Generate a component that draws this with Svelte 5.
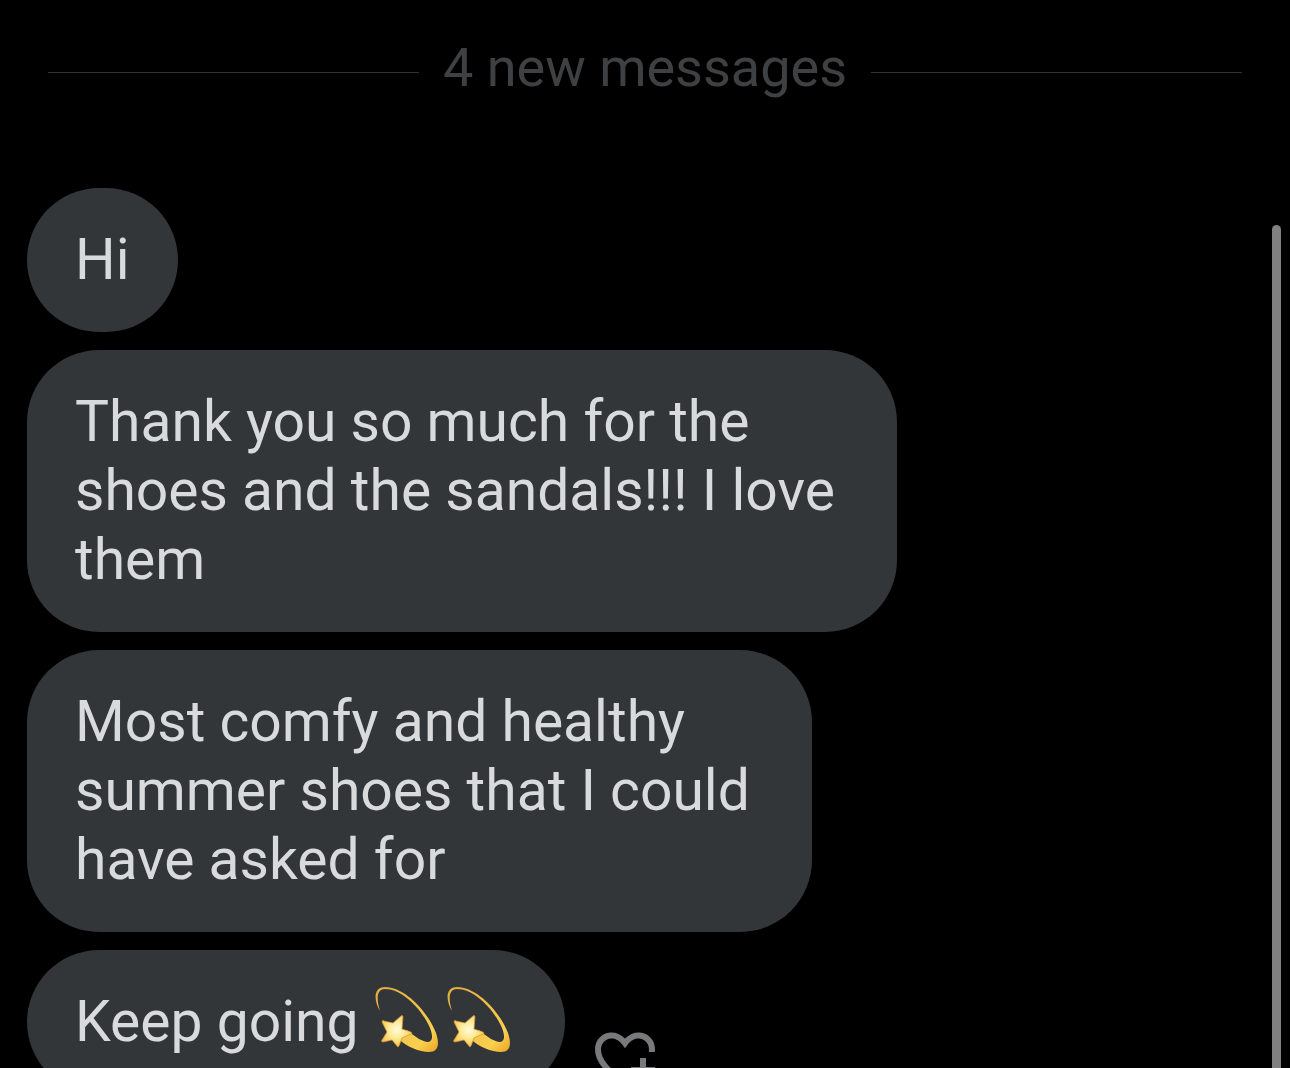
<script>
  const messages = [
    { lines: ['Hi'] },
    { lines: ['Thank you so much for the ', 'shoes and the sandals!!! I love ', 'them'] },
    { lines: ['Most comfy and healthy ', 'summer shoes that I could ', 'have asked for'] },
    { lines: ['Keep going '], stars: 2, canReact: true }
  ];
</script>

<svelte:head>
  <title>Messages</title>
</svelte:head>

<main class="conversation">
  <div class="divider">
    <span class="divider-label">4 new messages</span>
  </div>

  <ul class="messages">
    {#each messages as message}
      <li class="message">
        <p class="bubble">{message.lines.join('\n')}{#each { length: message.stars || 0 } as _}<svg class="emoji" viewBox="0 0 72 72" role="img" aria-label="dizzy">
              <defs>
                <linearGradient id="tail" x1="0" y1="0" x2="1" y2="1">
                  <stop offset="0" stop-color="#e3a93c" />
                  <stop offset="0.5" stop-color="#f2c14a" />
                  <stop offset="0.8" stop-color="#f9d04e" />
                  <stop offset="1" stop-color="#e9a426" />
                </linearGradient>
                <radialGradient id="star" cx="0.5" cy="0.45" r="0.6">
                  <stop offset="0" stop-color="#fffbe0" />
                  <stop offset="0.45" stop-color="#fdeb94" />
                  <stop offset="1" stop-color="#f3bd3a" />
                </radialGradient>
              </defs>
              <path
                fill="url(#tail)"
                d="M7 29C0 17 1 5 12 5c20 0 43 25 51 46 4 12 2 19-7 19-10 0-21-5-31-13l9-9c8 7 16 12 21 12 5-1 5-6 2-14C49 27 29 7 12 7 4 7 3 16 7 29z"
              />
              <path
                fill="url(#star)"
                stroke="#d98f3a"
                stroke-width="0.7"
                stroke-linejoin="round"
                d="M28 34c1-1 2 0 2 1l-1 12 9 3c1 1 1 2 0 2l-9 4-3 8c-1 1-2 1-2 0l-5-6-9 2c-1 0-2-1-1-2l5-8-5-10c0-1 1-2 2-1l9 2z"
              />
            </svg>{/each}</p>
        {#if message.canReact}
          <button class="react" aria-label="Add reaction">
            <svg viewBox="0 0 24 24" aria-hidden="true">
              <path
                d="M17 12v3h-2.998v2h3v3h2v-3h3v-2h-3.001v-3H17zm-5 6.839c-3.871-2.34-6.053-4.639-7.127-6.609-1.112-2.04-1.031-3.7-.479-4.82.561-1.13 1.667-1.84 2.91-1.91 1.222-.06 2.68.51 3.892 2.16l.806 1.09.805-1.09c1.211-1.65 2.668-2.22 3.89-2.16 1.242.07 2.347.78 2.908 1.91.334.677.49 1.554.321 2.59h2.011c.153-1.283-.039-2.469-.539-3.48-.887-1.79-2.647-2.91-4.601-3.01-1.65-.09-3.367.56-4.796 2.01-1.43-1.45-3.147-2.1-4.798-2.01-1.954.1-3.714 1.22-4.601 3.01-.896 1.81-.846 4.17.514 6.67 1.353 2.48 4.003 5.12 8.382 7.67l.502.299v-2.32z"
              />
            </svg>
          </button>
        {/if}
      </li>
    {/each}
  </ul>

  <div class="scroll-thumb"></div>
</main>

<style>
  :global(body) {
    background: #000;
  }
  .conversation {
    position: relative;
    box-sizing: border-box;
    height: 100vh;
    padding: 33px 48px 0 27px;
    overflow: hidden;
    font-family: Roboto, 'Open Sans', sans-serif;
  }
  .divider {
    display: flex;
    align-items: center;
    gap: 24px;
    margin: 0 0 85px 21px;
    color: #3f4042;
    font-size: 54px;
    line-height: 70px;
  }
  .divider::before,
  .divider::after {
    content: '';
    flex: 1;
    height: 1px;
    margin-top: 8px;
    background: #2f3336;
  }
  .messages {
    display: flex;
    flex-direction: column;
    gap: 18px;
    margin: 0;
    padding: 0;
    list-style: none;
  }
  .message {
    display: flex;
    align-items: flex-end;
    gap: 24px;
  }
  .bubble {
    margin: 0;
    padding: 37px 48px 38px;
    border-radius: 72px;
    background: #323639;
    color: #d9dadb;
    font-size: 57px;
    line-height: 69px;
    white-space: pre;
  }
  .emoji {
    width: 72px;
    height: 72px;
    margin: -10px 0;
    vertical-align: -3px;
  }
  .react {
    flex: none;
    width: 72px;
    height: 72px;
    padding: 0;
    border: 0;
    background: none;
    color: #78797b;
    cursor: pointer;
  }
  .react svg {
    display: block;
    fill: currentColor;
  }
  .scroll-thumb {
    position: absolute;
    top: 225px;
    right: 9px;
    bottom: -9px;
    width: 9px;
    border-radius: 5px;
    background: #808080;
  }
</style>
